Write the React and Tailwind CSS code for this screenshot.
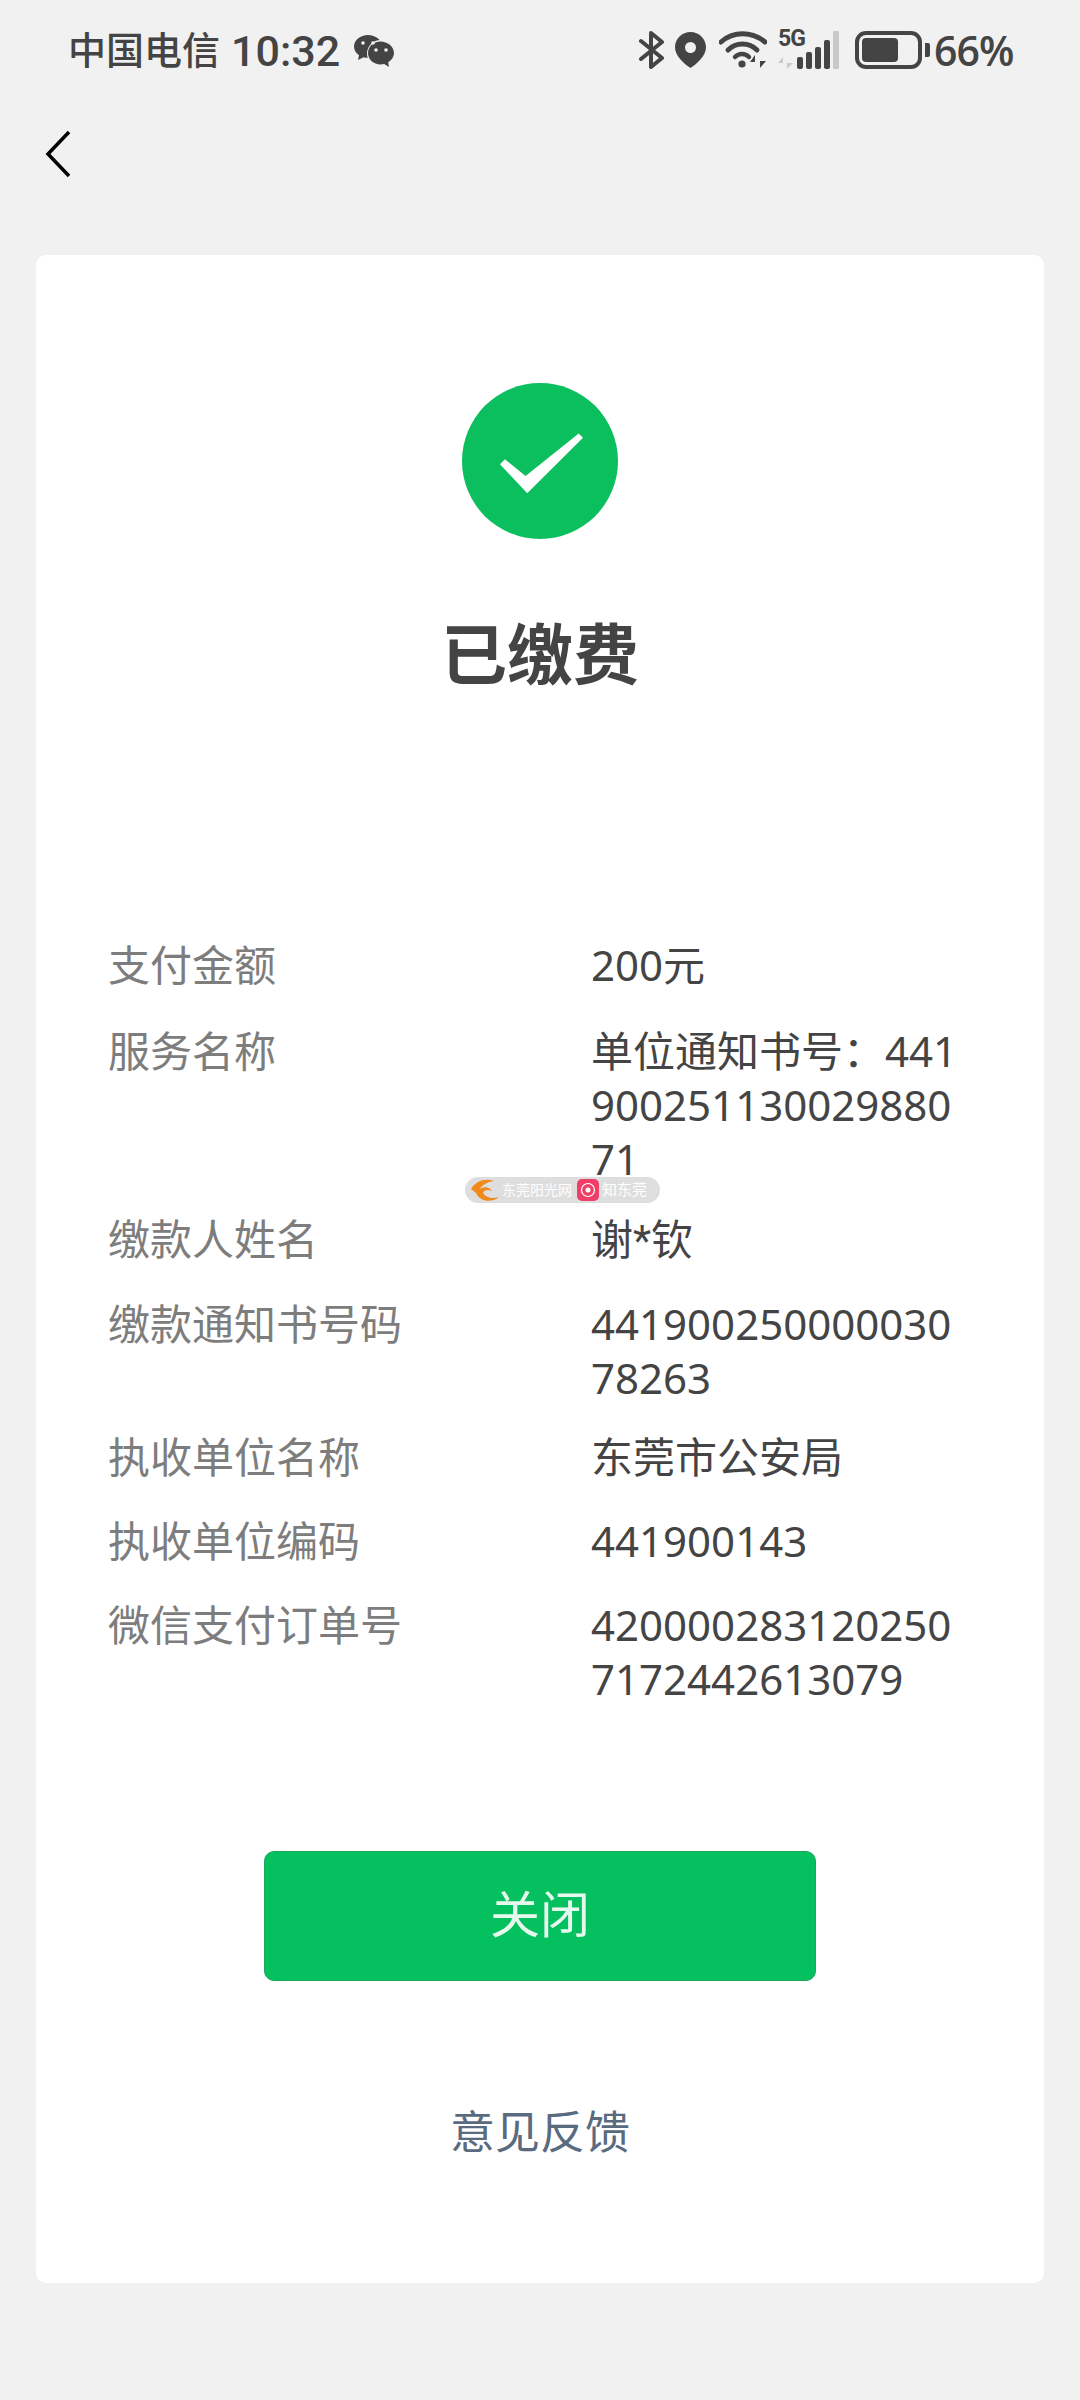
import React from "react";

const details = [
    { label: "支付金额", value: "200元", spacing: "mb-[2px]" },
    { label: "服务名称", value: "单位通知书号：44190025113002988071", spacing: "mb-[-3px]" },
    { label: "缴款人姓名", value: <>谢<span className="font-['Roboto',sans-serif]">*</span>钦</>, spacing: "mb-0" },
    { label: "缴款通知书号码", value: "44190025000003078263", spacing: "mb-[-4px]" },
    { label: "执收单位名称", value: "东莞市公安局", spacing: "mb-0" },
    { label: "执收单位编码", value: "441900143", spacing: "mb-0" },
    { label: "微信支付订单号", value: "4200002831202507172442613079", spacing: "mb-0" },
];

function StatusIcons() {
    return (
        <div className="flex items-center">
            {/* bluetooth */}
            <svg width="26" height="38" viewBox="0 0 26 38" fill="none" stroke="#444" strokeWidth="4" strokeLinejoin="round" strokeLinecap="round">
                <path d="M2 10 L23 27 L12 36 V2 L23 11 L2 28" />
            </svg>
            {/* location pin */}
            <svg className="ml-[10px]" width="31" height="36" viewBox="0 0 31 36">
                <path fillRule="evenodd" fill="#444" d="M15.5 0C7 0 0 6.8 0 15.2 0 24 9 31.5 15.5 36 22 31.5 31 24 31 15.200 31 6.800 24 0 15.500 0Zm0 10a5.500 5.500 0 1 1 0 11 5.500 5.500 0 0 1 0-11Z" />
            </svg>
            {/* wifi with arrows */}
            <svg className="ml-[13px]" width="48" height="38" viewBox="0 0 48 38" fill="none">
                <path d="M2 11 C14 0 33 0 46 11" stroke="#444" strokeWidth="5" strokeLinecap="round" />
                <path d="M9 19 C17 11 30 11 38 19" stroke="#444" strokeWidth="5" strokeLinecap="round" />
                <path d="M16 26 C20 22 26 22 30 26" stroke="#444" strokeWidth="4.500" strokeLinecap="round" />
                <circle cx="23" cy="33" r="3.600" fill="#444" />
                <path d="M36 37 V24 L31 31 H36 Z" fill="#444" />
                <path d="M41 24 V37 L47 30 H41 Z" fill="#444" />
            </svg>
            {/* 5G and signal bars */}
            <div className="relative ml-[11px] w-[64px] h-[38px]">
                <span className="absolute left-0 top-[-5px] text-[23px] leading-[26px] font-bold text-[#444] tracking-[-1px] font-['Roboto',sans-serif]">5G</span>
                <svg className="absolute left-0 top-0" width="64" height="38" viewBox="0 0 64 38">
                    <path d="M5 38 V26 L0 32 H5 Z M9 26 V38 L15 32 H9 Z" fill="#ccc" />
                    <rect x="19" y="26" width="6" height="12" rx="2" fill="#444" />
                    <rect x="28" y="21" width="6" height="17" rx="2" fill="#444" />
                    <rect x="37" y="16" width="6" height="22" rx="2" fill="#444" />
                    <rect x="46" y="9" width="6" height="29" rx="2" fill="#444" />
                    <rect x="55" y="0" width="6" height="38" rx="1" fill="#c9c9c9" />
                </svg>
            </div>
            {/* battery */}
            <div className="ml-[13px] flex items-center">
                <div className="w-[67px] h-[38px] rounded-[11px] border-[4px] border-[#444] p-[3px]">
                    <div className="w-[36px] h-full rounded-[4px] bg-[#444]" />
                </div>
                <div className="ml-[3px] w-[5px] h-[14px] rounded-r-[2px] bg-[#444]" />
            </div>
            <span className="ml-[4px] w-[79px] text-[41px] leading-[50px] font-semibold text-[#444] whitespace-nowrap font-['Open_Sans','Roboto',sans-serif] tracking-[-1px]">66%</span>
        </div>
    );
}

function Watermark() {
    return (
        <div className="absolute left-[465px] top-[1177px] w-[195px] h-[26px] rounded-full bg-[#dedede] flex items-center pl-[5px]">
            <svg width="30" height="24" viewBox="0 0 30 24" fill="none">
                <path d="M1 11 C6 3 15 0 24 3 C17 4 12 7 10 11 C14 8 20 9 22 13 C18 11 14 12 13 15 C16 20 23 21 29 19 C22 25 10 24 6 15 Z" fill="#f08a1d" />
            </svg>
            <span className="ml-[2px] w-[72px] text-[14px] leading-[16px] text-white whitespace-nowrap overflow-hidden">东莞阳光网</span>
            <svg className="ml-[3px]" width="22" height="22" viewBox="0 0 22 22" fill="none">
                <rect width="22" height="22" rx="5" fill="#ef3f68" />
                <circle cx="11" cy="11" r="6.500" stroke="#fff" strokeWidth="1.200" />
                <circle cx="11" cy="11" r="2.500" fill="#fff" />
            </svg>
            <span className="ml-[3px] text-[15px] leading-[16px] text-white whitespace-nowrap">知东莞</span>
        </div>
    );
}

export default function App() {
    return (
        <div className="relative w-[1080px] h-[2400px] bg-[#f1f1f1] font-['Roboto','Noto_Sans_CJK_SC',sans-serif] overflow-hidden">
            {/* Status bar */}
            <div className="h-[100px] pl-[68px] pr-[67px] flex items-center justify-between">
                <div className="flex items-center">
                    <span className="mt-[2px] text-[38px] leading-[50px] font-medium text-[#444]">中国电信</span>
                    <span className="ml-[11px] mt-[2px] text-[43px] leading-[50px] font-medium text-[#444]">10:32</span>
                    <svg className="ml-[14px] mt-[2px]" width="40" height="32" viewBox="0 0 40 32">
                        <path d="M14 0C6.500 0 0 5 0 11.500c0 3.600 2 6.700 5 8.800L4 25l5.600-2.800c1.400.4 2.900.6 4.400.6C21.500 22.800 28 17.800 28 11.500 28 5 21.500 0 14 0Z" fill="#444" />
                        <circle cx="26.500" cy="18.500" r="13.500" fill="#f1f1f1" />
                        <path d="M26.500 6.500c-7 0-12.500 5-12.500 11.500s5.500 11.500 12.500 11.500c1.300 0 2.500-.2 3.700-.5L35 32l-.8-4.800c3.500-2.100 5.800-5.400 5.800-9.200 0-6.500-6.500-11.500-13.500-11.500Z" fill="#444" />
                        <circle cx="9" cy="8" r="1.800" fill="#f1f1f1" />
                        <circle cx="19" cy="8" r="1.800" fill="#f1f1f1" />
                        <circle cx="22" cy="15" r="1.800" fill="#f1f1f1" />
                        <circle cx="32" cy="15" r="1.800" fill="#f1f1f1" />
                    </svg>
                </div>
                <StatusIcons />
            </div>

            {/* Back arrow */}
            <div className="h-[155px] pl-[45px] pt-[30px]">
                <svg width="26" height="48" viewBox="0 0 26 48" fill="none" stroke="#000" strokeWidth="3.500">
                    <path d="M24 2 L3 24 L24 46" />
                </svg>
            </div>

            {/* Card */}
            <div className="mx-[36px] h-[2028px] rounded-[10px] bg-white flex flex-col">
                <div className="mt-[128px] self-center w-[156px] h-[156px] rounded-full bg-[#0bbf5f] flex items-center justify-center">
                    <svg className="ml-[3px] mt-[3px]" width="85" height="62" viewBox="300 218 256 186">
                        <path d="M303 315 L318 300 L380 350 L540 222 L553 235 L385 402 Z" fill="#fff" />
                    </svg>
                </div>
                <h1 className="mt-[76px] text-center text-[66px] leading-[84px] font-bold text-[#444]">已缴费</h1>

                <div className="mt-[240px] pl-[72px] flex flex-col gap-[30px]">
                    {details.map((item) => (
                        <div key={item.label} className={`flex text-[42px] leading-[54px] ${item.spacing}`}>
                            <div className="w-[483px] h-[54px] pt-[1px] text-[#7d7d7d]">{item.label}</div>
                            <div className="w-[372px] mt-[-1px] text-[#444] break-all font-['Noto_Sans','Noto_Sans_CJK_SC',sans-serif]">{item.value}</div>
                        </div>
                    ))}
                </div>

                <button className="mt-[145px] self-center w-[552px] h-[130px] rounded-[10px] bg-[#05c05f] border border-[#1aa85a] text-[50px] text-[#e6f9ee]">
                    关闭
                </button>
                <div className="mt-[123px] text-center text-[45px] leading-[60px] text-[#5a6b80]">意见反馈</div>
            </div>

            <Watermark />
        </div>
    );
}
